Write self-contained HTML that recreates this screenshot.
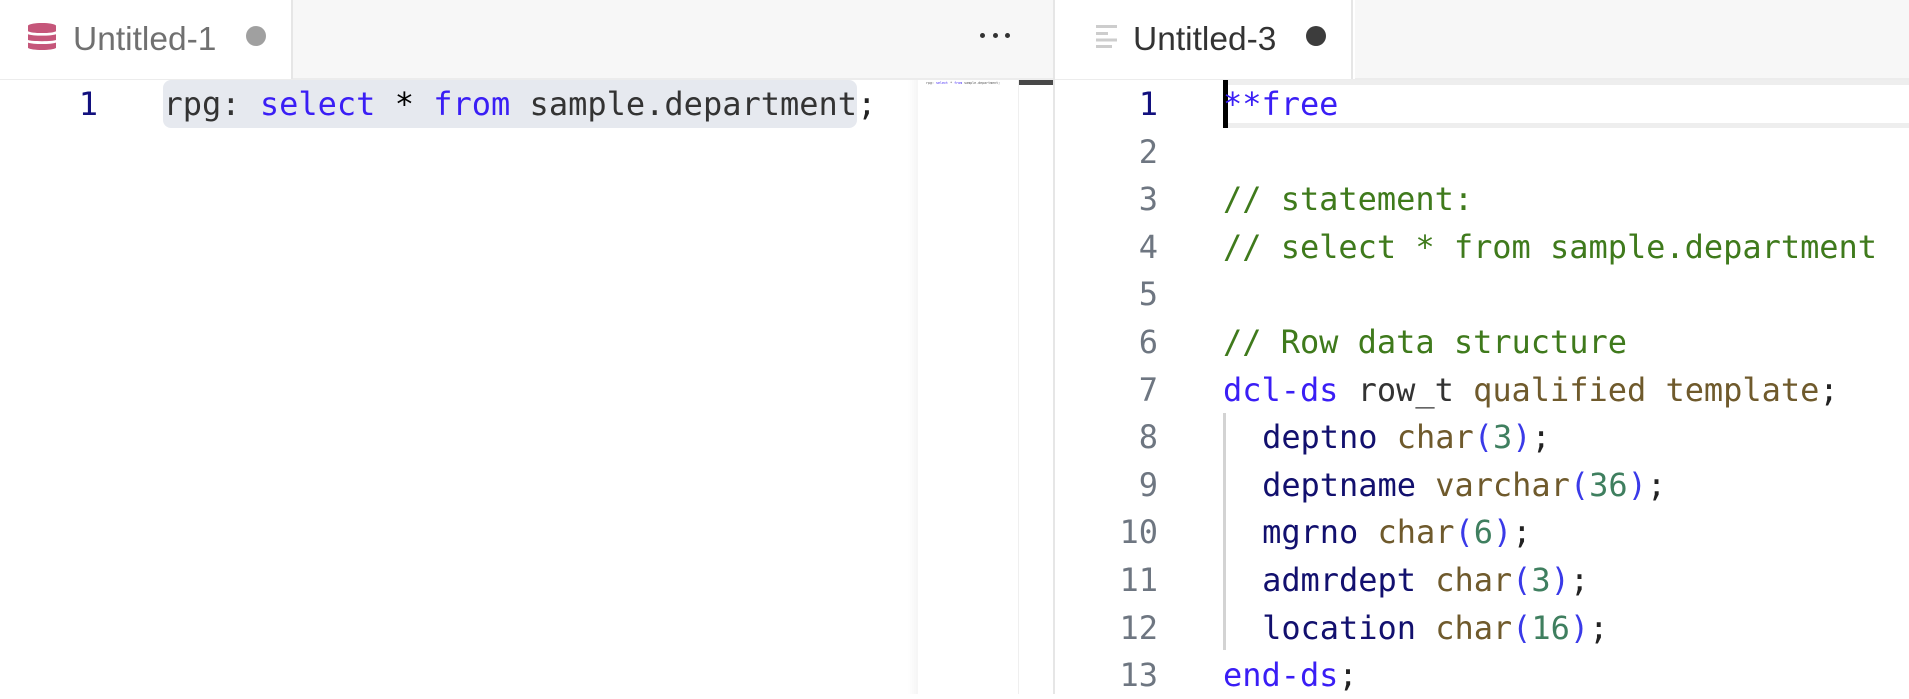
<!DOCTYPE html>
<html><head><meta charset="utf-8">
<style>
html,body{margin:0;padding:0;width:1909px;height:694px;overflow:hidden;background:#fff}
*{box-sizing:border-box}
.abs,.l,.n,.t{position:absolute}
.l{left:1223px;height:48px;white-space:pre;font:32px/48px "DejaVu Sans Mono","Liberation Mono",monospace;letter-spacing:-0.03px;color:#333}
.i{left:1223.6px}
.n{height:48px;width:60px;text-align:right;font:32px/48px "DejaVu Sans Mono","Liberation Mono",monospace;color:#6e7681}
.t{font:33.5px/40px "Liberation Sans",sans-serif;white-space:pre}
.k{color:#3a1ef5}.c{color:#3f7a1c}.f{color:#6f5a2c}.v{color:#12106e}.b{color:#3a3ae8}.d{color:#3f7f5f}.p{color:#222}
</style></head><body>
<!-- tab bars -->
<div class="abs" style="left:0;top:0;width:1909px;height:78px;background:#f7f7f7"></div>
<div class="abs" style="left:0;top:78px;width:1909px;height:2px;background:#ececec"></div>
<div class="abs" style="left:0;top:0;width:291px;height:79px;background:#fff"></div>
<div class="abs" style="left:291px;top:0;width:2px;height:79px;background:#e6e6e6"></div>
<div class="abs" style="left:1053px;top:0;width:302px;height:79px;background:#fff"></div>
<div class="abs" style="left:1351px;top:0;width:2px;height:79px;background:#e6e6e6"></div>
<div class="abs" style="left:1053px;top:0;width:2px;height:694px;background:#e6e6e6"></div>
<!-- db icon -->
<svg class="abs" style="left:28px;top:22px" width="28" height="30" viewBox="0 0 28 30">
<path d="M0 3.5C2 1.8 7 1 14 1S26 1.8 28 3.5V9.2C26 10.4 21 11 14 11S2 10.4 0 9.2Z" fill="#c5567a"/>
<path d="M0 12.2C3 13.2 8 13.6 14 13.6S25 13.2 28 12.2V18C26 18.8 21 19.2 14 19.2S2 18.8 0 18Z" fill="#c5567a"/>
<path d="M0 20.6C3 21.6 8 22 14 22S25 21.6 28 20.6V26C26 27.2 21 28 14 28S2 27.2 0 26Z" fill="#c5567a"/>
</svg>
<div class="t" style="left:73px;top:20px;color:#707070">Untitled-1</div>
<div class="abs" style="left:246px;top:26px;width:20px;height:20px;border-radius:50%;background:#a0a0a0"></div>
<!-- ellipsis -->
<div class="abs" style="left:980px;top:33px;width:5px;height:5px;border-radius:50%;background:#333"></div>
<div class="abs" style="left:992.5px;top:33px;width:5px;height:5px;border-radius:50%;background:#333"></div>
<div class="abs" style="left:1005px;top:33px;width:5px;height:5px;border-radius:50%;background:#333"></div>
<!-- lines icon -->
<svg class="abs" style="left:1096px;top:25px" width="22" height="24" viewBox="0 0 22 24">
<rect x="0" y="0" width="21" height="3" fill="#cdcdcd"/><rect x="0" y="7" width="12" height="3" fill="#cdcdcd"/><rect x="0" y="13.5" width="21" height="3" fill="#cdcdcd"/><rect x="0" y="20" width="16" height="3" fill="#cdcdcd"/>
</svg>
<div class="t" style="left:1133px;top:20px;color:#333">Untitled-3</div>
<div class="abs" style="left:1306px;top:26px;width:20px;height:20px;border-radius:50%;background:#3c3c3c"></div>
<!-- left editor -->
<div class="abs" style="left:163px;top:80px;width:694px;height:48px;background:#e6e9ef;border-radius:8px"></div>
<div class="n" style="left:38px;top:80px;color:#12107e">1</div>
<div class="l" style="left:163.5px;top:80px;letter-spacing:0"><span style="color:#333">rpg: </span><span class="k">select</span> <span style="color:#000">*</span> <span class="k">from</span> sample.department<span class="p">;</span></div>
<!-- minimap -->
<div class="abs" style="left:908px;top:80px;width:10px;height:614px;background:linear-gradient(to right,#fff,#f5f5f5)"></div>
<div class="abs" style="left:1018px;top:80px;width:1px;height:614px;background:#efefef"></div>
<div class="abs" style="left:1019px;top:80px;width:34px;height:5px;background:#484848"></div>
<div class="abs" style="left:926px;top:80px;white-space:pre;font:3.33px/5px 'DejaVu Sans Mono',monospace;color:#555;padding-top:1px">rpg: <span class="k">select</span> * <span class="k">from</span> sample.department;</div>
<!-- right editor -->
<div class="abs" style="left:1228px;top:80px;width:681px;height:48px;border-top:5px solid #eee;border-bottom:5px solid #eee"></div>
<div class="abs" style="left:1223px;top:80px;width:5px;height:48px;background:#000"></div>
<div class="abs" style="left:1223px;top:413px;width:3px;height:237px;background:#d3d3d3"></div>

<div class="n" style="left:1098px;top:80px;color:#12107e">1</div>
<div class="n" style="left:1098px;top:127.6px">2</div>
<div class="n" style="left:1098px;top:175.2px">3</div>
<div class="n" style="left:1098px;top:222.8px">4</div>
<div class="n" style="left:1098px;top:270.4px">5</div>
<div class="n" style="left:1098px;top:318px">6</div>
<div class="n" style="left:1098px;top:365.6px">7</div>
<div class="n" style="left:1098px;top:413.2px">8</div>
<div class="n" style="left:1098px;top:460.8px">9</div>
<div class="n" style="left:1098px;top:508.4px">10</div>
<div class="n" style="left:1098px;top:556px">11</div>
<div class="n" style="left:1098px;top:603.6px">12</div>
<div class="n" style="left:1098px;top:651.2px">13</div>

<div class="l k" style="top:80px">**free</div>
<div class="l c" style="top:175.2px">// statement:</div>
<div class="l c" style="top:222.8px">// select * from sample.department</div>
<div class="l c" style="top:318px">// Row data structure</div>
<div class="l" style="top:365.6px"><span class="k">dcl-ds</span> row_t <span class="f">qualified</span> <span class="f">template</span><span class="p">;</span></div>
<div class="l i" style="top:413.2px">  <span class="v">deptno</span> <span class="f">char</span><span class="b">(</span><span class="d">3</span><span class="b">)</span><span class="p">;</span></div>
<div class="l i" style="top:460.8px">  <span class="v">deptname</span> <span class="f">varchar</span><span class="b">(</span><span class="d">36</span><span class="b">)</span><span class="p">;</span></div>
<div class="l i" style="top:508.4px">  <span class="v">mgrno</span> <span class="f">char</span><span class="b">(</span><span class="d">6</span><span class="b">)</span><span class="p">;</span></div>
<div class="l i" style="top:556px">  <span class="v">admrdept</span> <span class="f">char</span><span class="b">(</span><span class="d">3</span><span class="b">)</span><span class="p">;</span></div>
<div class="l i" style="top:603.6px">  <span class="v">location</span> <span class="f">char</span><span class="b">(</span><span class="d">16</span><span class="b">)</span><span class="p">;</span></div>
<div class="l" style="top:651.2px"><span class="k">end-ds</span><span class="p">;</span></div>
</body></html>
